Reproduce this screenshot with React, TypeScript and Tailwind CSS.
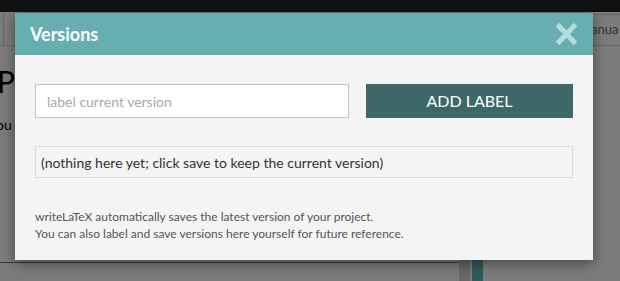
import * as React from "react"

export default function App() {
  return (
    <div className="relative w-[620px] h-[281px] overflow-hidden bg-[#7b7b7b] font-['Lato','Open_Sans',sans-serif]">
      {/* top bar */}
      <div className="h-[12px] bg-[#111111]" />

      {/* page behind the overlay */}
      <div className="flex justify-between h-[34px] border-b border-[#6a6a6a]">
        <div className="w-[4px] border-r border-[#666]" />
        <div className="w-[30px] mt-[2px] h-[32px] flex items-center border-y border-l border-[#666] text-[13px] text-[#333]">
          anua
        </div>
      </div>
      <div className="pt-[20px] text-black leading-none">
        <div className="text-[30px] -ml-[3px]">P</div>
        <div className="text-[14px] mt-[22px] -ml-[4px]">ou</div>
      </div>
      <div className="absolute left-0 bottom-0 w-[620px] h-[21px] flex">
        <div className="w-[458px] h-[1px] mt-[2px] bg-[#3a3a3a]" />
        <div className="w-[11px] ml-[1px] bg-[#666]" />
        <div className="w-[11px] ml-[2px] bg-[#2f5b5b]" />
      </div>

      {/* modal */}
      <div className="absolute left-[15px] top-[13px] w-[578px] h-[247px] bg-[#f4f4f4] shadow-[0_3px_12px_rgba(0,0,0,0.45)]">
        <div className="flex items-center justify-between h-[42px] pl-[15px] pr-[15px] bg-[#67aeb0]">
          <h2 className="text-[18px] font-bold text-white">Versions</h2>
          <svg width="23" height="24" viewBox="0 0 23 24">
            <path d="M2.5 2.5L20.5 21.5M20.5 2.5L2.5 21.5" stroke="#b3dcdc" strokeWidth="5" />
          </svg>
        </div>

        <div className="px-[20px] pt-[29px]">
          <div className="flex gap-[17px]">
            <input
              type="text"
              placeholder="label current version"
              className="w-[314px] h-[34px] px-[11px] bg-white border border-[#c4c4c4] text-[14px] text-[#333] placeholder:text-[#a9a9a9] outline-none"
            />
            <button className="w-[207px] h-[34px] bg-[#3e6868] text-white text-[16px]">ADD LABEL</button>
          </div>

          <div className="mt-[28px] h-[32px] flex items-center px-[5px] border border-[#dcdcdc] text-[14px] text-[#333]">
            (nothing here yet; click save to keep the current version)
          </div>

          <div className="mt-[30px] text-[12px] leading-[17px] text-[#555]">
            <p>writeLaTeX automatically saves the latest version of your project.</p>
            <p>You can also label and save versions here yourself for future reference.</p>
          </div>
        </div>
      </div>
    </div>
  )
}
